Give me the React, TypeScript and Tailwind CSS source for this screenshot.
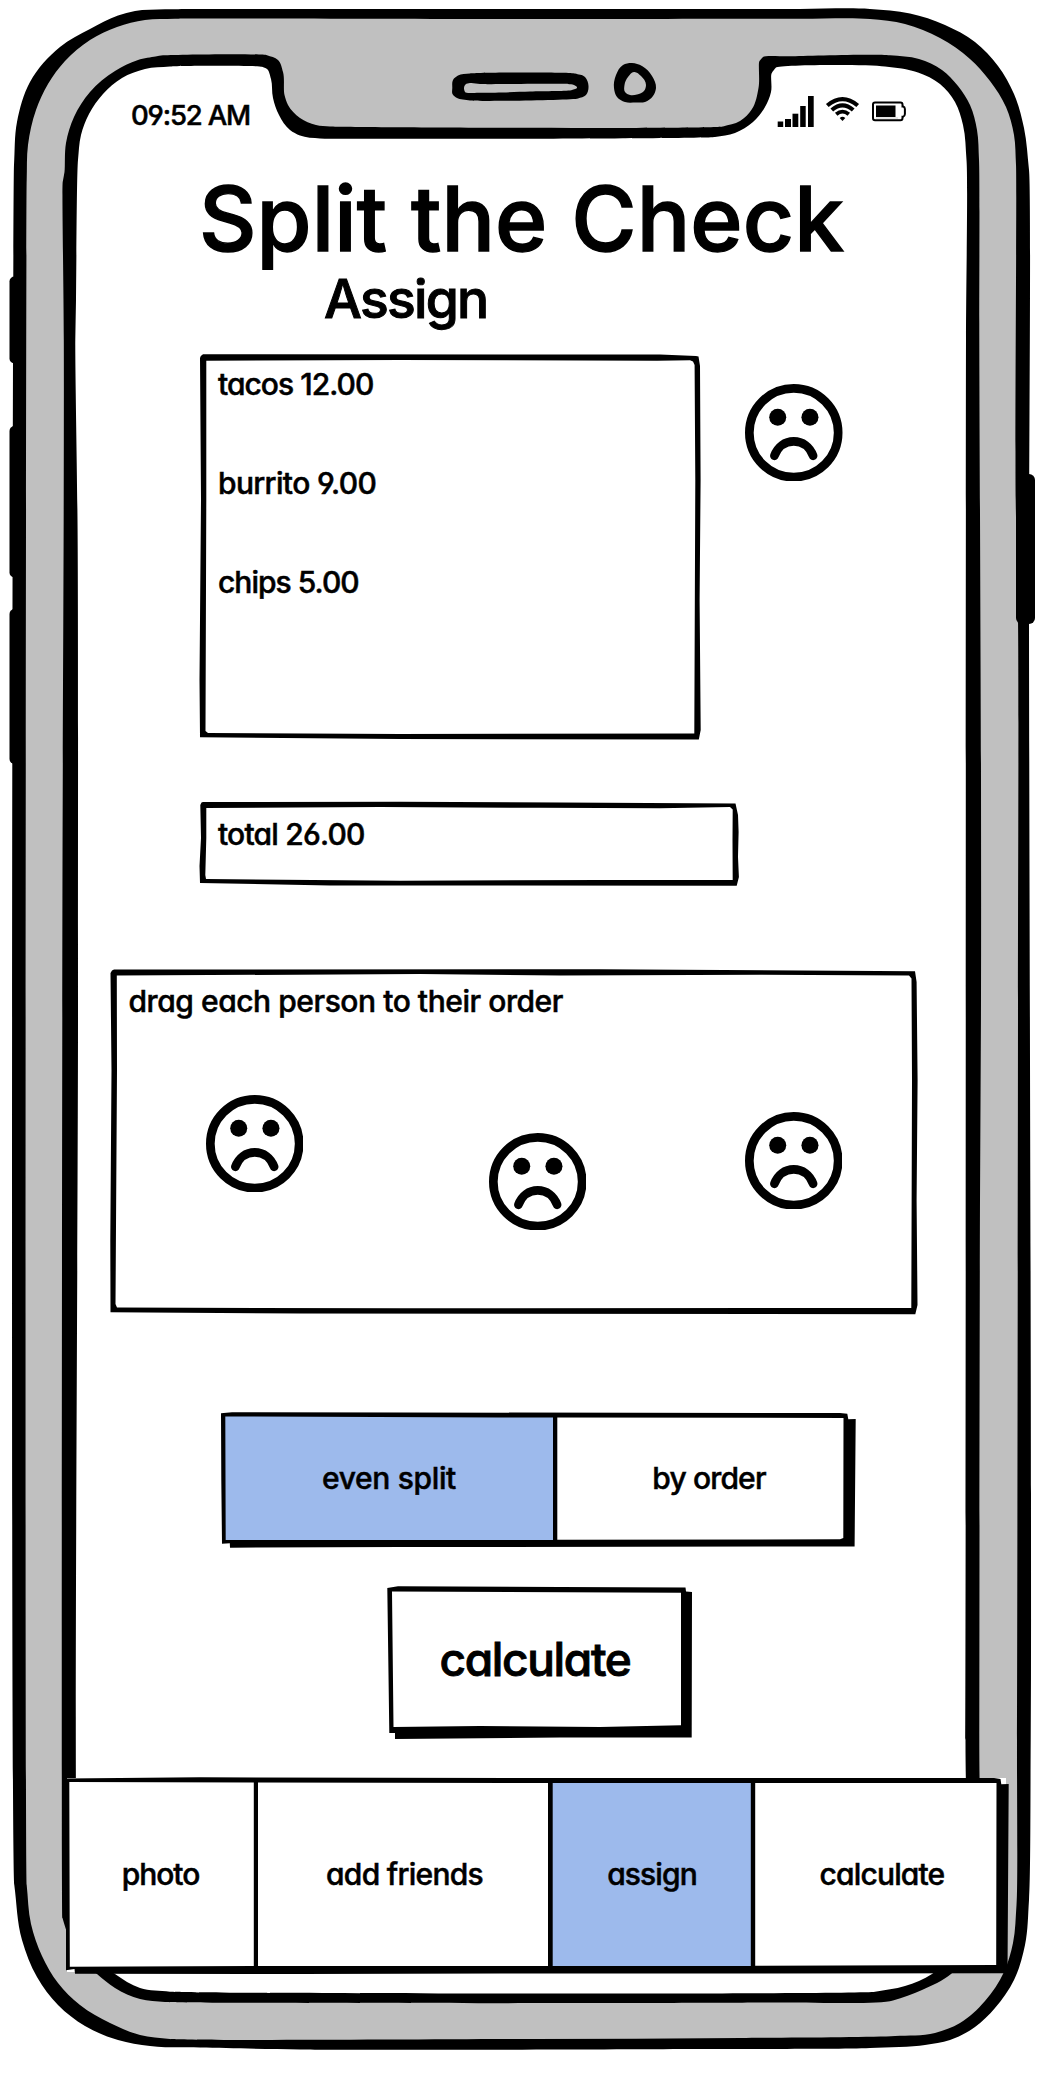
import React from 'react';

type Pt = [number, number];

const parse = (s: string): Pt[] =>
  s.trim().split(/\s+/).map((p) => p.split(',').map(Number) as Pt);

/** Closed straight-edged outline. */
const poly = (s: string) => 'M' + s.trim().split(/\s+/).join('L') + 'Z';

/** Closed outline softened at every point, without overshoot on long edges. */
function smooth(s: string): string {
  const p = parse(s);
  const n = p.length;
  const tangent = (i: number): [number, number, number, number] => {
    const a = p[(i + n - 1) % n];
    const m = p[i];
    const b = p[(i + 1) % n];
    const la = Math.hypot(m[0] - a[0], m[1] - a[1]) || 1;
    const lb = Math.hypot(b[0] - m[0], b[1] - m[1]) || 1;
    const dx = ((m[0] - a[0]) / la) * lb + ((b[0] - m[0]) / lb) * la;
    const dy = ((m[1] - a[1]) / la) * lb + ((b[1] - m[1]) / lb) * la;
    const l = Math.hypot(dx, dy) || 1;
    return [dx / l, dy / l, la / 3, lb / 3];
  };
  let d = `M${p[0][0]},${p[0][1]}`;
  for (let i = 0; i < n; i++) {
    const j = (i + 1) % n;
    const t = tangent(i);
    const u = tangent(j);
    const kt = Math.min(t[3], t[2] * 1.6);
    const ku = Math.min(u[2], u[3] * 1.6);
    d += `C${p[i][0] + t[0] * kt},${p[i][1] + t[1] * kt} ${p[j][0] - u[0] * ku},${p[j][1] - u[1] * ku} ${p[j][0]},${p[j][1]}`;
  }
  return d + 'Z';
}

const BODY =
  '14,165 17,122 30,82 60,47 90,29 118,15.5 135,11 165,9.3 330,9 800,9 870,9 910,13.5 945,25 975,42 998,66 1014,94 1024,128 1029,170 1029,600 1031,1500 1030.7,1740 1029,1900 1025,1945 1014,1980 995,2008 975,2027 950,2040 925,2045 870,2048 700,2049 300,2049.5 200,2047.5 150,2046 118,2040 85,2026 58,2005 37,1977 22,1940 14.3,1885';
const BEZEL =
  '26.7,180 28,145 36,110 48,84 65,61 90,40 117,27 145,20 175,18.7 530,19 800,18.7 870,19 905,24 940,38 970,59 990,81 1006,107 1014,135 1016,165 1015.7,500 1018,620 1018,1000 1017,1740 1016.5,1905 1013,1943 1004,1972 985,2001 960,2023 935,2033 895,2036 740,2038 530,2039 170,2039 140,2035 110,2023 80,2005 58,1983 42,1956 31,1924 26.7,1885';
const RIM =
  '155.5,56.5 138,60 115,71 90,92 74,117 66,143 64.5,172 62.7,182 63.8,340 63.7,500 62.7,800 62.5,1918 65.5,1928 78,1956 97,1974 115,1988 140,1999 165,2002 770,2002.5 893,2000.5 922,1990 951,1974 972,1948 979,1900 979.3,1740 980,1200 981,1000 981,780 979.3,340 979,160 977,130 970,105 958,86 942,70 919,59 890,55.3 790,56.3 763,57 759.5,61 758.5,88 752,109 740,121 723,126.5 330,126.5 316,125 300,118 288,105 284.5,95 283,72 278,60 267,55.3 163,55.3';
const SCREEN =
  '170,66.5 145,69 122,78 103,94 89,114 81,135 78,160 76,300 75.3,340 77.5,520 78,1000 78,1900 88,1950 115,1974 140,1988 170,1991.7 875,1991.7 905,1986 932,1974 955,1950 965,1900 965.5,1740 966,340 966.5,160 963,125 955,102 940,84 918,72.5 885,66.5 776,67.5 771.8,73 771,92 765,107 753,122 735,133 715,137 337,138.8 320,138.5 300,135.5 290,130 279,115 273,98 271,79 267,69 262,66.7';
const SPEAKER =
  '452.3,88 453,80 458,75.5 470,73.5 575,73.5 585,77 588.5,86 586,95 578,98.5 470,100.5 457,98 452.5,94';
const SPEAKER_SLOT =
  '464,88 465.5,84.5 470,83 480,84 568,84 574,85 577,87.3 572,90 530,91.5 480,92.8 465,92';
const CAMERA =
  '614,88 616,75 623,65 632,63 642,66 652,76 656,88 653,96 645,102 636,102.5 625,102 617,97';
const LENS = '624.5,85 628,77 634,72 641,76 646,85 644,91 637,94.5 630,95 625,92';

function PhoneFrame() {
  return (
    <svg className="absolute inset-0 -z-10" width="1057" height="2073" viewBox="0 0 1057 2073" aria-hidden="true">
      <rect x="9.5" y="276.5" width="14" height="87" rx="5" />
      <rect x="9.5" y="426" width="14" height="151.5" rx="5" />
      <rect x="9.5" y="609" width="14" height="155" rx="5" />
      <path d={smooth(BODY)} />
      <path d={smooth(BEZEL)} fill="#c0c0c0" />
      <rect x="1016" y="474" width="19" height="150" rx="6" />
      <path d={smooth(RIM)} />
      <path d={smooth(SCREEN)} fill="#fff" />
      <path d={smooth(SPEAKER)} />
      <path d={smooth(SPEAKER_SLOT)} fill="#c0c0c0" />
      <path d={smooth(CAMERA)} />
      <path d={smooth(LENS)} fill="#c0c0c0" />
    </svg>
  );
}

/** Hand-drawn outline laid over a box. */
function Outline({ box, outer, inner }: { box: string; outer: string; inner: string[] }) {
  return (
    <svg
      className="pointer-events-none absolute inset-0 h-full w-full overflow-visible"
      viewBox={box}
      aria-hidden="true"
    >
      <path fillRule="evenodd" d={poly(outer) + inner.map(poly).join('')} />
    </svg>
  );
}

function SadFace({ className }: { className: string }) {
  return (
    <svg className={'h-[97.5px] w-[97.5px] shrink-0 ' + className} viewBox="0 0 292 292" fill="none" stroke="#000" strokeWidth="26" strokeLinecap="round">
      <circle cx="146" cy="146" r="133" />
      <path d="M88 215C98 188 120 172 146 172S194 188 204 215" />
      <g fill="#000" stroke="none">
        <circle cx="98" cy="99.5" r="25.5" />
        <circle cx="194.5" cy="99.5" r="25.5" />
      </g>
    </svg>
  );
}

function StatusBar() {
  return (
    <header className="flex h-[167px] items-start pt-[95px] pl-[131px]">
      <span className="w-[646px] text-[27.5px] leading-10 tracking-[-1.15px]">09:52 AM</span>
      <svg width="38" height="33" viewBox="0 0 38 33" aria-label="signal">
        <rect x="0.7" y="26.5" width="5.5" height="5.5" />
        <rect x="8" y="24" width="6" height="8" />
        <rect x="15.5" y="18.7" width="5.8" height="13.3" />
        <rect x="23.2" y="11" width="5.5" height="21" />
        <rect x="31" y="1" width="5.7" height="31" />
      </svg>
      <svg className="ml-[10px]" width="36" height="28" viewBox="0 0 36 28" fill="none" stroke="#000" strokeWidth="4.2" aria-label="wifi">
        <path d="M2.3 10.5Q17.5 -2.3 32.7 10.5" />
        <path d="M6.8 15Q17.5 5.8 28.2 15" />
        <path d="M11.2 19.3Q17.5 14 23.8 19.3" strokeWidth="3.8" />
        <path d="M14.7 22.9Q17.5 20.8 20.3 22.9L17.5 26Z" fill="#000" stroke="none" />
      </svg>
      <svg className="mt-[5px] ml-[10px]" width="38" height="23" viewBox="0 0 38 23" fill="none" stroke="#000" strokeWidth="2" aria-label="battery">
        <path d="M4 2.5H29.5Q31.5 2.5 31.5 4.5V6.5H32.3Q33.8 7 33.9 9V14Q33.8 16 32.3 16.7H31.5V18Q31.5 20.3 29.5 20.3H4Q2 20.3 2 18V4.5Q2 2.5 4 2.5Z" />
        <rect x="5" y="5.5" width="19.5" height="11.5" fill="#000" stroke="none" />
        <path d="M5 18H27" stroke="#ccc" strokeWidth="1" />
      </svg>
    </header>
  );
}

export default function App() {
  return (
    <div
      className="relative isolate flex h-[2073px] w-[1057px] flex-col items-start overflow-hidden bg-white text-[30px] leading-9 font-medium whitespace-nowrap text-black [-webkit-text-stroke:0.5px_black]"
      style={{ fontFamily: 'Inter, "Liberation Sans", sans-serif', fontFeatureSettings: '"cv11", "ss01"' }}
    >
      <PhoneFrame />
      <StatusBar />

      <h1 className="ml-[199px] text-[89px] leading-[104px] tracking-[0.1px] [-webkit-text-stroke:1.4px_black]">
        Split the Check
      </h1>
      <h2 className="ml-[324px] text-[53.5px] leading-[56px] tracking-[-1.8px] [-webkit-text-stroke:1px_black]">Assign</h2>

      <div className="mt-[27px] ml-[200px] flex items-start">
        <section className="relative flex h-[385px] w-[500px] flex-col gap-[63px] pt-[12px] pl-[18px]">
          <Outline
            box="200 354 500 385"
            outer="200,358 200.8,356 203,354.3 660,354.6 696,356 698.5,356.5 700,366 700.6,480 699.6,600 700.7,730 698.8,739.5 400,739 200,737.3 199.5,680 201,500"
            inner={['206.3,360.7 400,360 657,360.7 690,360.3 693,361.5 694.6,365 695.3,480 694.3,733.5 400,734 208,733 205.5,731 206.3,500']}
          />
          <span className="tracking-[-0.97px]">tacos 12.00</span>
          <span className="tracking-[-0.65px]">burrito 9.00</span>
          <span className="tracking-[-0.97px]">chips 5.00</span>
        </section>
        <SadFace className="mt-[29.5px] ml-[45px]" />
      </div>

      <section className="relative mt-[62px] ml-[200px] h-[85px] w-[539px] pt-[15px] pl-[18px]">
        <Outline
          box="200 801 539 85"
          outer="200.3,805 201.5,802.5 203,802 400,801.8 560,802.5 735.5,803.5 738,815 738.6,832 738,857 738.9,877 736.7,885.7 330,885.5 200,883 199.5,866 201,838"
          inner={['206.3,808 380,807 540,807.8 660,808.3 730,807 732.7,809.5 732.5,840 732.7,880 600,880 400,880.8 206,879 205.3,875 206.3,838']}
        />
        <span className="tracking-[-0.8px]">total 26.00</span>
      </section>

      <section className="relative mt-[83px] ml-[110px] flex h-[345px] w-[807px] flex-col pt-[14px] pl-[18.5px]">
        <Outline
          box="110 969 807 345"
          outer="110.5,973 112,970.5 114,969.5 600,969.3 915,971.3 916.6,982 917.6,1080 916.6,1200 917.5,1305 915.3,1314.3 300,1313.5 110.5,1312.3 110.3,1240 111.5,1070"
          inner={['116.8,975.6 420,974 560,975.5 760,974.7 909,975.5 911.5,978.5 912,1080 911.3,1308 400,1308.3 117,1307.5 115.5,1304 117,1070']}
        />
        <span className="tracking-[-0.45px]">drag each person to their order</span>
        <div className="mt-[75.5px] flex items-start pl-[77px]">
          <SadFace className="" />
          <SadFace className="mt-[38px] ml-[185.5px]" />
          <SadFace className="mt-[17px] ml-[158.5px]" />
        </div>
      </section>

      <div className="relative mt-[99px] ml-[221px] h-[134px] w-[634px]">
        <div className="flex h-[130px] pl-[2px]">
          <button className="w-[332px] shrink-0 bg-[#9dbaec] tracking-[-0.35px]">even split</button>
          <button className="w-[308px] shrink-0 tracking-[-0.86px]">by order</button>
        </div>
        <Outline
          box="221 1413 634 134"
          outer="221,1413.3 232,1412.2 400,1412.5 840,1413 847.3,1413.7 848.3,1419.3 855.7,1419 855,1500 854.6,1546.5 400,1547 230,1547.7 229.8,1543.3 222,1543.7 221.3,1480"
          inner={['225.3,1416.5 500,1417.5 553,1417.5 553,1540 225.7,1540', '557.3,1417.5 843.5,1418 843.3,1538 840,1539.3 557.3,1539.7']}
        />
      </div>

      <button className="relative mt-[40px] ml-[387px] h-[152px] w-[305px] pr-[9px] pb-[8px] text-[46px] leading-[50px] tracking-[-1.35px] [-webkit-text-stroke:0.9px_black]">
        calculate
        <Outline
          box="387 1587 305 152"
          outer="387.3,1588 398,1586.3 560,1587 685.5,1587.5 686,1591.5 692,1592 691.7,1737.5 560,1737.5 395,1739 395,1733 389.3,1733 388.3,1660"
          inner={['392,1591.5 681,1592.8 681,1725.3 600,1727 480,1726 393.5,1727']}
        />
      </button>

      <nav className="relative mt-[39px] ml-[67px] h-[196px] w-[942px]">
        <div className="flex h-[194px] w-[939px] bg-white pt-px">
          <button className="h-[190px] w-[189px] shrink-0 pr-[2px] tracking-[-1px]">photo</button>
          <button className="h-[190px] w-[294px] shrink-0 pl-[3px] tracking-[-0.72px]">add friends</button>
          <button className="h-[190px] w-[203px] shrink-0 bg-[#9dbaec] pl-px tracking-[-0.9px]">assign</button>
          <button className="h-[190px] w-[256px] shrink-0 pl-[2px] tracking-[-0.85px]">calculate</button>
        </div>
        <Outline
          box="67 1778 942 196"
          outer="66,1778.5 200,1777.3 540,1778 994,1778 1000.5,1779 1001.3,1784.3 1008.7,1784 1007.5,1973.3 500,1973.5 300,1974 75,1973.8 74.5,1969 66,1970.3 66,1930 66.5,1860"
          inner={[
            '69.3,1782 253.8,1782.5 253.8,1966 69.8,1966.7',
            '258,1782.5 548,1783 548,1966 258,1966',
            '552.7,1783 750.8,1783 750.8,1966 552.7,1966',
            '755.2,1783 996.5,1783 996.2,1965 755.2,1965.7',
          ]}
        />
      </nav>
    </div>
  );
}
